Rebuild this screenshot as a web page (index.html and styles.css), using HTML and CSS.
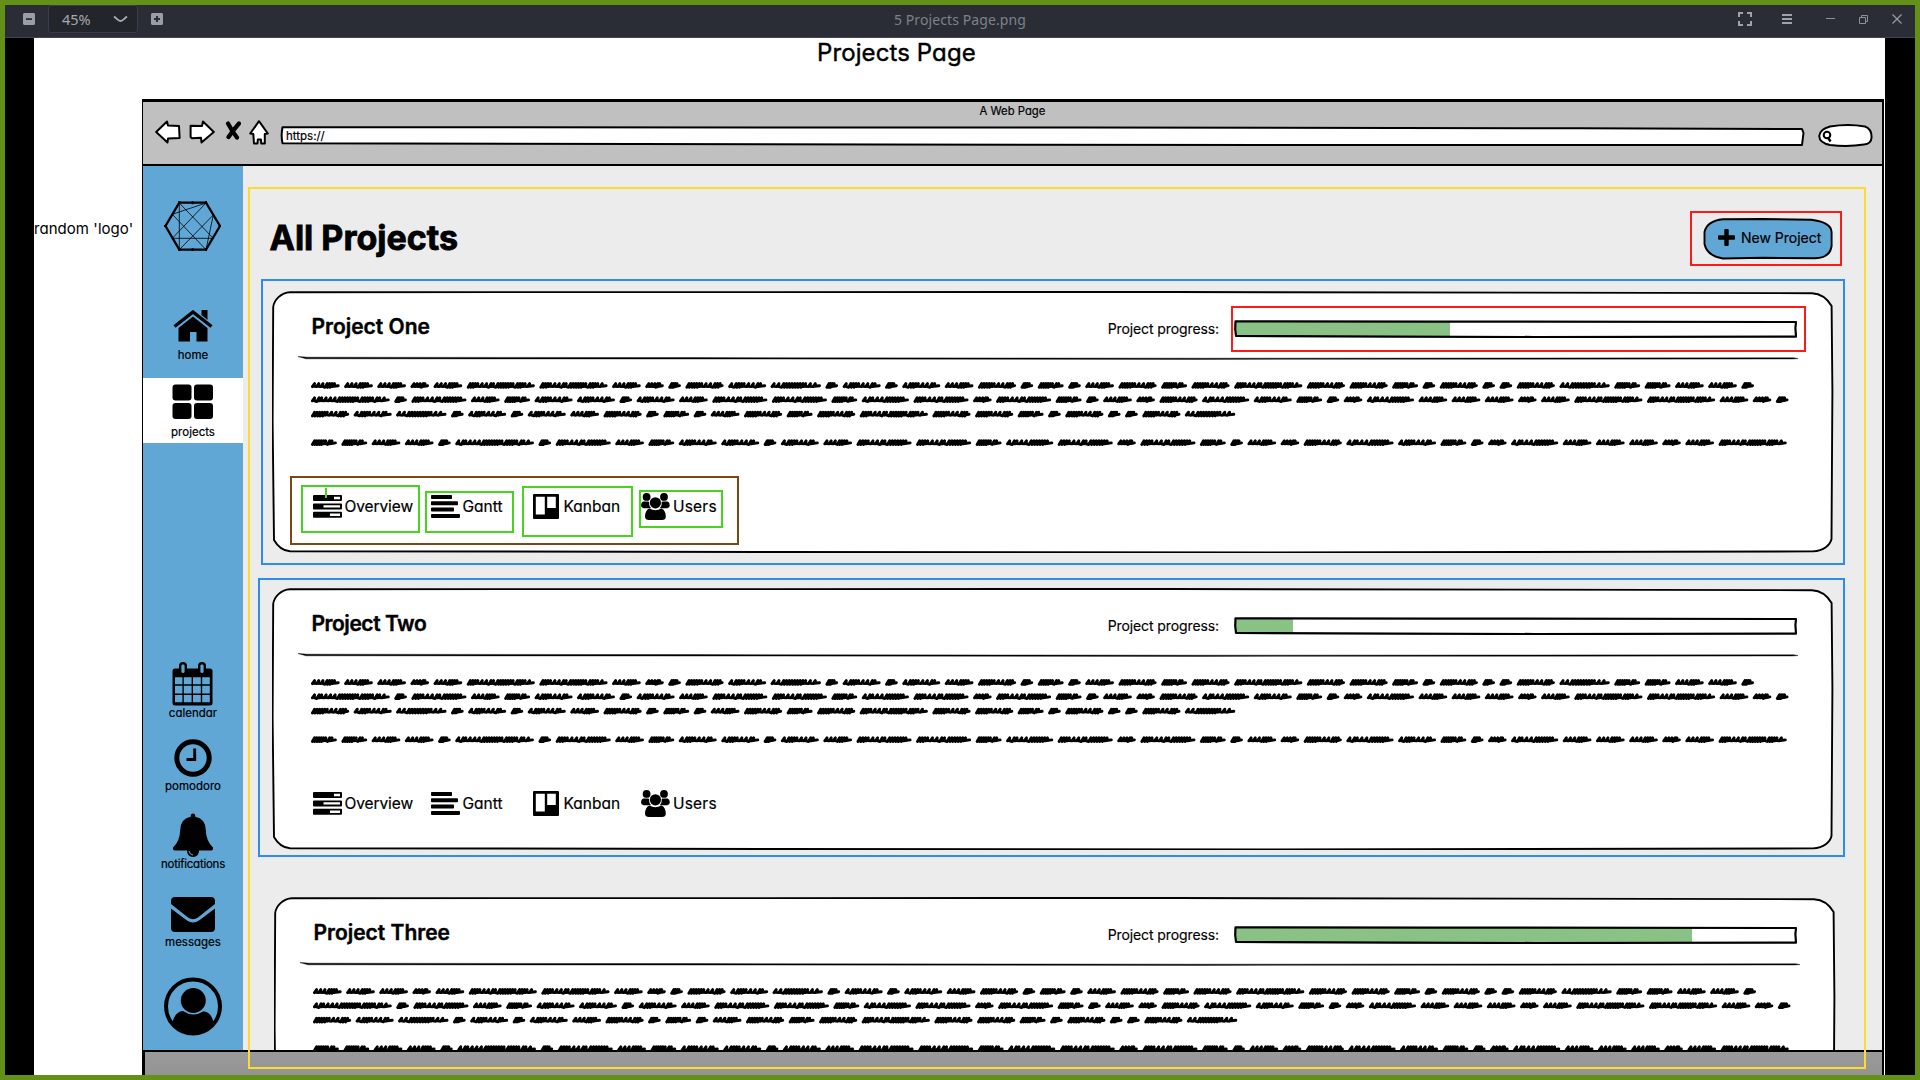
FILE: index.html
```html
<!DOCTYPE html>
<html lang="en">
<head>
<meta charset="utf-8">
<title>5 Projects Page.png</title>
<link rel="stylesheet" href="styles.css">
</head>
<body>
<svg class="defs" width="0" height="0">
  <defs>
    <symbol id="card-outline" viewBox="0 0 1562 262">
      <path d="M18 1.2C9 1.5 2 9 1.2 16L.6 130 2 249C6 256 12 260 18 260.2L500 261 1000 261.4 1541 260.4C1552 260 1558 254 1559.5 248L1560.4 100 1559.6 15C1555 7 1548 2.6 1540 2.2L900 1Z" fill="#fff" stroke="#000" stroke-width="1.9"/>
    </symbol>
    <symbol id="divider" viewBox="0 0 1500 4">
      <path d="M0 .6Q5 .9 9 1.2L400 1.6 900 2.2 1496 1.8 1500 2.6 1494 3 900 3.4 8 2.8Z" stroke="#000" stroke-width=".4"/>
    </symbol>
    <symbol id="bar-outline" viewBox="0 0 563 18">
      <path d="M1.5 1.4 200 1.6 562 2 561.4 8 562 16.6 300 17 160 16.6 2 16 1.2 9Z" fill="none" stroke="#000" stroke-width="2.2" stroke-linejoin="round"/>
    </symbol>
    <symbol id="i-overview" viewBox="0 0 29 23">
      <path fill-rule="evenodd" d="M1 0h27q1 0 1 1v4q0 1-1 1H1Q0 6 0 5V1Q0 0 1 0ZM21 1.8v2.4h6V1.8ZM1 8.4h27q1 0 1 1v4q0 1-1 1H1q-1 0-1-1v-4q0-1 1-1ZM10.5 10.2v2.4H27v-2.4ZM1 16.8h27q1 0 1 1v4q0 1-1 1H1q-1 0-1-1v-4q0-1 1-1ZM17 18.6V21h10v-2.4Z"/>
    </symbol>
    <symbol id="i-gantt" viewBox="0 0 29 23">
      <rect width="21" height="4" rx=".8"/><rect y="6.3" width="27" height="4" rx=".8"/><rect y="12.6" width="23" height="4" rx=".8"/><rect y="18.9" width="29" height="4" rx=".8"/>
    </symbol>
    <symbol id="i-kanban" viewBox="0 0 26 25">
      <path fill-rule="evenodd" d="M1 0h24q1 0 1 1v23q0 1-1 1H1q-1 0-1-1V1Q0 0 1 0ZM2.8 2.8v17.6h9V2.8ZM14.2 2.8V14h8.6V2.8Z"/>
    </symbol>
    <symbol id="i-users" viewBox="0 0 29 27">
      <circle cx="5.6" cy="3.9" r="3.9"/><circle cx="23" cy="3.9" r="3.9"/>
      <path d="M2 8.4h5.2q1 .2 1 1.4-.4 3.6 2.2 5.4H2.6Q0 14.600 0 12.600 0 9.500 2 8.400ZM26.800 8.400h-5.200q-1 .2-1 1.400.4 3.600-2.200 5.400h7.800q2.600-.6 2.600-2.600 0-3.100-2-4.200Z"/>
      <circle cx="14.400" cy="9.800" r="5.600"/>
      <path d="M8.500 15.500Q14.400 19 20.300 15.500 24.800 17 24.800 24 24.600 27 21 27H8Q4.300 27 4 24 4 17 8.500 15.500Z"/>
    </symbol>
  </defs>
</svg>

<div class="window">
  <header class="titlebar">
    <div class="zoom-tools">
      <svg class="zoom-out" width="12" height="12"><path d="M1 0h10l1 1v10l-1 1H1l-1-1V1Z" fill="#9a9ca6"/><path d="M3 5.200h6v1.800H3Z" fill="#2b2d36"/></svg>
      <div class="zoom-select"><span>45%</span><svg width="15" height="8"><path d="M1 1.500C4 3.500 5 6 7.500 6S11 3.500 14 1.500" fill="none" stroke="#a9abb3" stroke-width="1.900"/></svg></div>
      <svg class="zoom-in" width="12" height="12"><path d="M1 0h10l1 1v10l-1 1H1l-1-1V1Z" fill="#9a9ca6"/><path d="M3 5h2V3h2v2h2v2H7v2H5V7H3Z" fill="#2b2d36"/></svg>
    </div>
    <div class="file-name">5 Projects Page.png</div>
    <div class="window-buttons">
      <svg width="14" height="14"><path d="M5 1H1v4M9 1h4v4M1 9v4h4M13 9v4H9" fill="none" stroke="#a0a2a9" stroke-width="2"/></svg>
      <svg width="10" height="10"><path d="M0 1h10M0 5h10M0 9h10" stroke="#a0a2a9" stroke-width="2"/></svg>
      <svg width="9" height="10"><path d="M0 4.500h9" stroke="#8f9199"/></svg>
      <svg width="9" height="9"><path d="M.5 2.500h6v6h-6ZM2.500 2V.5h6v6H7" fill="none" stroke="#8f9199"/></svg>
      <svg width="10" height="10"><path d="M.5.5l9 9M9.500.5l-9 9" stroke="#9a9ca3" stroke-width="1.200"/></svg>
    </div>
  </header>

  <div class="viewer">
    <div class="canvas">
      <h1 class="canvas-title">Projects Page</h1>
      <div class="mock">
        <p class="note">random 'logo'</p>
        <div class="browser">
          <div class="chrome">
            <div class="chrome-title">A Web Page</div>
            <div class="chrome-row">
              <svg width="26" height="24"><path d="M1.200 12 12 1.500 13 5.500 24 6 24.600 18 13 18.500 12.500 22.500Z" fill="#fff" stroke="#000" stroke-width="2" stroke-linejoin="round"/></svg>
              <svg width="26" height="24"><path d="M24.800 12 14 1.500 13 6 1.600 5.800 1.600 17 3 18.300 12 17.800 12.500 22.500Z" fill="#fff" stroke="#000" stroke-width="2" stroke-linejoin="round"/></svg>
              <svg class="stop" width="16" height="19"><path d="M3 2.500Q7 10 12 16.500M14 2.500Q9 8 3.500 16" fill="none" stroke="#000" stroke-width="4.200" stroke-linecap="round"/></svg>
              <svg class="go-home" width="20" height="25"><path d="M10 1.200 18.800 13.500 15.800 14 15.800 23.500 12.200 23.500 12 19.500 8.800 19.500 8.500 23.500 5 23.500 4.300 14 1.200 13.500Z" fill="#fff" stroke="#000" stroke-width="2" stroke-linejoin="round"/></svg>
              <div class="address">
                <svg viewBox="0 0 1525 20" width="1525" height="20"><path d="M2.500 1.200 800 1.600 1300 2.200 1522 3 1523.500 7 1522 19 1100 19 600 18.600 2.500 17.200Q.8 10 2.500 1.200Z" fill="#fff" stroke="#000" stroke-width="2" stroke-linejoin="round"/></svg>
                <span>https://</span>
              </div>
              <svg class="search" width="55" height="23"><path d="M12 2.500Q30-.5 47 2.500 54 5 53.500 14 53 20 46 20.500 30 23 12 21 1.500 19 1.200 12 2 5 12 2.500Z" fill="#fff" stroke="#000" stroke-width="2"/><circle cx="9" cy="11" r="3.300" fill="none" stroke="#000" stroke-width="2"/><path d="M10 13.500 12.500 17.500" stroke="#000" stroke-width="2.400"/></svg>
            </div>
          </div>

          <div class="app">
            <nav class="sidebar">
              <svg class="logo" width="57" height="50"><g transform="translate(-164 -201)" fill="none" stroke="#000"><path d="M179.300 202.700H206L220 226 206 249.700H179.300L165.500 226Z" stroke-width="2.300"/><path d="M179.300 203V249M179.300 203 213.300 238.300M206 203 172.300 238.300M206 203 172.300 214.300M172.300 214.300 206 249.700M213.300 215 179.300 249.700M213.300 215 206 249.700M172.300 238.300H213.300" stroke-width=".8"/><path d="M163.800 226h3M218.600 226h3M179.300 201v3M206 201v3M192.600 201.200v3M192.600 248.200v3M179.300 248v3M206 248v3" stroke-width="2"/></g></svg>
              <a class="item home">
                <svg width="40" height="32"><path d="M5.500 18 20 6.500 34.500 18V31.500H23.500V22H17V31.500H5.500Z"/><path d="M1.500 16.500 20 2 38.500 16.500" fill="none" stroke="#61a7d6" stroke-width="6"/><path d="M1.500 16.500 20 2 38.500 16.500" fill="none" stroke="#000" stroke-width="3.400"/><path d="M28.500 0h6v10l-6-5Z"/></svg>
                <span>home</span>
              </a>
              <a class="item projects">
                <svg width="42" height="36"><rect x=".5" y=".5" width="19" height="16" rx="3"/><rect x="22" y=".5" width="19" height="16" rx="3"/><rect x=".5" y="19" width="19" height="16" rx="3"/><rect x="22" y="19" width="19" height="16" rx="3"/></svg>
                <span>projects</span>
              </a>
              <a class="item calendar">
                <svg width="41" height="44"><rect x=".5" y="6.500" width="40" height="37" rx="2.500"/><g fill="#61a7d6"><path d="M3 15.300h7.400v7H3ZM11.800 15.300h7.800v7h-7.800ZM21 15.300h7.800v7H21ZM30.200 15.300h7.600v7h-7.600ZM3 23.800h7.400v7.700H3ZM11.800 23.800h7.800v7.700h-7.800ZM21 23.800h7.800v7.700H21ZM30.200 23.800h7.600v7.700h-7.600ZM3 33h7.400v7.300H3ZM11.800 33h7.800v7.300h-7.800ZM21 33h7.800v7.300H21ZM30.200 33h7.600v7.300h-7.600Z"/></g><path d="M7 12V4Q7 0 11 0t4 4v8ZM26 12V4Q26 0 30 0t4 4v8Z"/><rect x="9.400" y="2.400" width="3.200" height="8.600" rx="1.400" fill="#61a7d6"/><rect x="28.400" y="2.400" width="3.200" height="8.600" rx="1.400" fill="#61a7d6"/></svg>
                <span>calendar</span>
              </a>
              <a class="item pomodoro">
                <svg width="38" height="38"><circle cx="19" cy="19" r="16.200" fill="none" stroke="#000" stroke-width="5"/><path d="M20.700 9.500V20.500H12.500" fill="none" stroke="#000" stroke-width="2.900"/></svg>
                <span>pomodoro</span>
              </a>
              <a class="item notifications">
                <svg width="42" height="45"><path d="M21 .5q2.500 0 2.300 3.200Q33.500 5.500 33.800 17 34 28 41 34.500q.5 3-2 3H3q-2.500 0-2-3Q8 28 8.200 17 8.500 5.500 18.700 3.700 18.500.5 21 .5ZM15 37.500H27Q27 44 21 44T15 37.500Z"/><path d="M17 38Q17.500 41.500 21 42" fill="none" stroke="#61a7d6"/></svg>
                <span>notifications</span>
              </a>
              <a class="item messages">
                <svg width="44" height="35"><path d="M4 0H40Q44 0 44 4V7Q35 14 27 20.500 22 24 17 20.500L0 7V4Q0 0 4 0ZM0 11.500 16 23.500Q22 27.500 28 23.500L44 11.500V31Q44 35 40 35H4Q0 35 0 31Z"/></svg>
                <span>messages</span>
              </a>
              <svg class="avatar" width="58" height="59"><circle cx="29" cy="29.500" r="27" fill="none" stroke="#000" stroke-width="4"/><circle cx="29.300" cy="23.500" r="12.500"/><path d="M19 34Q29.300 41 39.500 34.200 47.500 35 49.500 45.500L43 53Q29 60 15 53L8.500 45.500Q11 34.500 19 34Z"/></svg>
            </nav>

            <main class="main">
              <div class="page-head">
                <h2>All Projects</h2>
                <button class="new-project">
                  <svg class="pill" viewBox="0 0 130 42" width="130" height="42"><path d="M20 1.300 60 1 108 1.800Q128 4 128.600 14V28Q127 40 112 40.300L60 39.800 20 40.500Q4 38 1.500 26V14Q4 3 20 1.300Z" fill="#61a7d6" stroke="#000" stroke-width="1.900"/></svg>
                  <svg class="plus" width="17" height="17"><path d="M6.300 1q0-1 1-1h2.400q1 0 1 1v5.300H16q1 0 1 1v2.400q0 1-1 1h-5.300V16q0 1-1 1H7.300q-1 0-1-1v-5.300H1q-1 0-1-1V7.300q0-1 1-1h5.300Z"/></svg>
                  <span>New Project</span>
                </button>
              </div>

              <section class="card">
                <svg class="outline"><use href="#card-outline"/></svg>
                <div class="card-head"><h3>Project One</h3><span class="progress-label">Project progress:</span><div class="progress"><div class="fill" style="width:214px"></div><svg><use href="#bar-outline"/></svg></div></div>
                <svg class="divider"><use href="#divider"/></svg>
                <svg class="scribble"></svg>
                <div class="tabs">
                  <a><svg width="29" height="23"><use href="#i-overview"/></svg><span class="t-overview">Overview</span></a>
                  <a><svg width="29" height="23"><use href="#i-gantt"/></svg><span class="t-gantt">Gantt</span></a>
                  <a><svg width="26" height="25"><use href="#i-kanban"/></svg><span class="t-kanban">Kanban</span></a>
                  <a><svg width="29" height="27"><use href="#i-users"/></svg><span class="t-users">Users</span></a>
                </div>
              </section>

              <section class="card">
                <svg class="outline"><use href="#card-outline"/></svg>
                <div class="card-head"><h3 class="narrow">Project Two</h3><span class="progress-label">Project progress:</span><div class="progress"><div class="fill" style="width:57px"></div><svg><use href="#bar-outline"/></svg></div></div>
                <svg class="divider"><use href="#divider"/></svg>
                <svg class="scribble"></svg>
                <div class="tabs">
                  <a><svg width="29" height="23"><use href="#i-overview"/></svg><span class="t-overview">Overview</span></a>
                  <a><svg width="29" height="23"><use href="#i-gantt"/></svg><span class="t-gantt">Gantt</span></a>
                  <a><svg width="26" height="25"><use href="#i-kanban"/></svg><span class="t-kanban">Kanban</span></a>
                  <a><svg width="29" height="27"><use href="#i-users"/></svg><span class="t-users">Users</span></a>
                </div>
              </section>

              <section class="card last">
                <svg class="outline"><use href="#card-outline"/></svg>
                <div class="card-head"><h3>Project Three</h3><span class="progress-label">Project progress:</span><div class="progress"><div class="fill" style="width:456px"></div><svg><use href="#bar-outline"/></svg></div></div>
                <svg class="divider"><use href="#divider"/></svg>
                <svg class="scribble"></svg>
              </section>
            </main>
          </div>
          <div class="status"></div>
        </div>
      </div>
    </div>
  </div>

  <div class="mark page-mark"></div>
  <div class="mark button-mark"></div>
  <div class="mark card-one-mark"></div>
  <div class="mark card-two-mark"></div>
  <div class="mark progress-mark"></div>
  <div class="mark tabs-mark"></div>
  <div class="mark overview-mark"></div>
  <div class="mark gantt-mark"></div>
  <div class="mark kanban-mark"></div>
  <div class="mark users-mark"></div>
  <div class="tick"></div>
</div>
<script src="scribble.js"></script>
</body>
</html>
```
FILE: scribble.js
```js
// Placeholder copy: each letter is one word. s = loose stroke, d = dense stroke.
const WORDS = {
  A: { w: 28.6, p: 'sssddds' },
  B: { w: 18.5, p: 'sssds' },
  C: { w: 68.1, p: 'dddsssdsddddddsdddss' },
  D: { w: 12.6, p: 'ddds' },
  E: { w: 38.1, p: 'dddddsssddd' },
  F: { w: 37.9, p: 'sdddsssds' },
  G: { w: 78.7, p: 'sdssssdddddddsddddsdss' },
  M: { w: 47.1, p: 'sdsssdddddds' },
  N: { w: 50.3, p: 'ssddddddddsss' },
  O: { w: 55.0, p: 'dddsssdsdddddds' },
  P: { w: 25.8, p: 'dddddsds' }
};
const GAP = 4.57;
const LINES = [
  { y: 9.3, t: 'AAABACCABDEFNDFDFAEDPDAEPECEEPDEDDENPPAAD' },
  { y: 23.5, t: 'GDOAPFFDFAOOPMOBOPDABEMFPDBMAAABACCABD' },
  { y: 37.9, t: 'EFNDFDFAEDPDAEPECEEPDEDDEN' },
  { y: 66.5, t: 'PPAADGDOAPFFDFAOOPMOBOPDABEMFPDBMAAABAC' }
];

function word(x, y, { w, p }) {
  const total = [...p].reduce((n, c) => n + (c === 's' ? 2 : 1.15), 0);
  const unit = (w - 4.5) / total;
  let d = '';
  let cx = x + 1.4;
  for (const c of p) {
    const step = unit * (c === 's' ? 2 : 1.15);
    const low = y + (c === 's' ? 1.3 : 2);
    d += (d ? 'L' : 'M') + cx.toFixed(1) + ' ' + low + 'L' + (cx + 2.2).toFixed(1) + ' ' + (y - 1.7);
    d += 'L' + (cx + 1.5).toFixed(1) + ' ' + (y + 1);
    cx += step;
  }
  return d + 'L' + (x + w - 1.4).toFixed(1) + ' ' + (y + 0.4);
}

let path = '';
for (const line of LINES) {
  let x = 0;
  for (const key of line.t) {
    path += word(x, line.y, WORDS[key]);
    x += (WORDS[key].w + GAP);
  }
}
document.querySelectorAll('.scribble').forEach(svg => {
  svg.innerHTML = '<path d="' + path + '"/>';
});
```
FILE: styles.css
```css
* { box-sizing: border-box; }
body {
  margin: 0;
  background: #639118;
  font-family: Inter, "Open Sans", sans-serif;
  font-feature-settings: "cv11";
  color: #000;
}
h1, h2, h3, p { margin: 0; }
svg { display: block; flex: none; }
.defs { position: absolute; }

.window {
  position: relative;
  display: flex;
  flex-direction: column;
  width: 1920px;
  height: 1080px;
  border: 5px solid #639118;
  overflow: hidden;
}

/* Viewer title bar */
.titlebar {
  display: grid;
  grid-template-columns: 1fr auto 1fr;
  align-items: center;
  height: 33px;
  padding-bottom: 4px;
  background: #2b2d36;
  border-bottom: 1px solid #41434e;
  font-family: "Noto Sans", sans-serif;
}
.zoom-tools { display: flex; align-items: center; padding-left: 18px; }
.zoom-select {
  display: flex;
  align-items: center;
  justify-content: space-between;
  width: 90px;
  height: 28px;
  margin: 0 13px;
  padding: 0 9px 0 13px;
  border: 1px solid #3a3c47;
  border-radius: 3px;
  background: #23252c;
  color: #a6a8ad;
  font-size: 14.5px;
}
.zoom-select span { letter-spacing: -.1px; }
.file-name { color: #7d8188; font-size: 14px; letter-spacing: .1px; }
.window-buttons {
  display: flex;
  align-items: center;
  justify-content: flex-end;
  padding-right: 13px;
}
.window-buttons svg:nth-child(1) { margin-right: 30px; }
.window-buttons svg:nth-child(2) { margin-right: 34px; }
.window-buttons svg:nth-child(3) { margin-right: 24px; }
.window-buttons svg:nth-child(4) { margin-right: 24px; }

.viewer { flex: 1; min-height: 0; padding: 0 30px 0 29px; background: #000; }
.canvas { height: 100%; background: #fff; overflow: hidden; }
.canvas-title {
  height: 61px;
  padding: 0 0 0 783px;
  font-size: 24px;
  line-height: 29px;
  font-weight: 400;
  letter-spacing: .1px;
  -webkit-text-stroke: .4px #000;
}
.mock { display: grid; grid-template-columns: 108px 1743px; }
.note { padding-top: 120px; font-size: 15px; line-height: 20px; letter-spacing: .05px; white-space: nowrap; }

/* Sketched browser */
.browser {
  height: 976px;
  width: 1742px;
  border: 2px solid #000;
  border-top-width: 3px;
  border-bottom: 0;
  border-left-width: 1px;
}
.chrome { height: 64px; background: #c0c0c0; border-bottom: 2px solid #000; }
.chrome-title { font-size: 11.300px; line-height: 14px; padding-top: 2px; height: 16px; text-align: center; -webkit-text-stroke: .2px #000; }
.chrome-row { display: flex; align-items: center; padding-left: 12px; height: 28px; }
.chrome-row svg:nth-child(2) { margin-left: 8px; }
.chrome-row .stop { margin: -3px 0 0 10px; }
.chrome-row .go-home { margin-left: 8px; }
.address { display: grid; align-items: center; margin: 8px 0 0 11px; width: 1525px; }
.address > * { grid-area: 1 / 1; }
.address span { margin-top: -1px; padding-left: 6px; font-size: 11.500px; line-height: 14px; -webkit-text-stroke: .2px #000; }
.search { margin: 6px 0 0 13px; }

.app { display: flex; height: 884px; overflow: hidden; background: #ececec; }
.sidebar {
  display: flex;
  flex-direction: column;
  align-items: center;
  width: 100px;
  padding-top: 35px;
  background: #61a7d6;
}
.sidebar svg { margin-left: -1px; }
.item {
  display: flex;
  flex-direction: column;
  align-items: center;
  width: 100%;
  font-size: 11.500px;
  line-height: 14px;
  -webkit-text-stroke: .2px #000;
}
.item svg { margin-bottom: 6px; -webkit-text-stroke: 0; }
.home { margin-top: 59px; }
.projects { height: 65px; margin-top: 16px; padding-top: 6px; background: #fff; }
.projects svg { margin-bottom: 5px; }
.calendar { margin-top: 219px; }
.calendar svg { margin-bottom: 0; }
.notifications svg { margin-bottom: -1px; }
.notifications span { letter-spacing: -.25px; }
.pomodoro { margin-top: 19px; }
.pomodoro svg { margin-bottom: 2px; }
.notifications { margin-top: 20px; }
.messages { margin-top: 26px; }
.messages svg { margin-bottom: 3px; }
.avatar { margin-top: 28px; }

.main { flex: 1; padding-left: 28.500px; }
.page-head {
  display: flex;
  justify-content: space-between;
  align-items: center;
  height: 125px;
  padding: 20px 49px 0 0;
}
.page-head h2 { font-size: 34px; line-height: 40px; font-weight: 700; margin: -2px 0 0 -2px; -webkit-text-stroke: .8px #000; }
.new-project {
  display: grid;
  grid-template-columns: 40px 1fr;
  align-items: center;
  width: 130px;
  height: 42px;
  padding: 0;
  border: 0;
  background: none;
  font: inherit;
  font-size: 14px;
  text-align: left;
}
.new-project > * { grid-row: 1; }
.new-project .pill { grid-column: 1 / 3; }
.new-project .plus { grid-column: 1; margin: -2px 0 0 15px; }
.new-project span { grid-column: 2; margin: -2px 0 0 -2px; white-space: nowrap; -webkit-text-stroke: .2px #000; }

.card { position: relative; width: 1562px; height: 262px; margin-bottom: 35px; }
.card.last { margin: 47px 0 0 2px; }
.outline { position: absolute; inset: 0; width: 1562px; height: 262px; z-index: 0; }
.card > :not(.outline) { position: relative; }
.card-head { display: flex; align-items: center; height: 65px; padding: 11px 36.500px 0 40px; }
.card.last .card-head { padding-right: 38.500px; }
.card-head h3 { flex: 1; margin-top: -5px; font-size: 21px; line-height: 26px; font-weight: 600; -webkit-text-stroke: .4px #000; }
.card-head h3.narrow { letter-spacing: -.450px; }
.progress-label { font-size: 14px; letter-spacing: -.1px; margin: -1px 15px 0 0; -webkit-text-stroke: .15px #000; }
.progress { display: grid; width: 563px; height: 18px; background: #fff; }
.progress > * { grid-area: 1 / 1; }
.progress svg { width: 563px; height: 18px; z-index: 1; }
.fill { height: 14px; margin: 2px 0 0 2px; background: #8ac184; }
.divider { width: 1500px; height: 4px; margin-left: 26px; }
.scribble {
  width: 1490px;
  height: 76px;
  margin: 16px 0 0 39.500px;
  fill: none;
  stroke: #000;
  stroke-width: 2.900;
  stroke-linecap: round;
  stroke-linejoin: round;
}
.tabs {
  display: grid;
  grid-template-columns: 118px 102px 108.500px auto;
  height: 27px;
  margin: 41px 0 0 41px;
  font-size: 15.500px;
}
.tabs a { display: flex; align-items: center; gap: 3px; -webkit-text-stroke: .2px #000; }
.tabs a:nth-child(3) { gap: 5px; }
.t-overview { letter-spacing: -.1px; }
.t-users { letter-spacing: .2px; }
.status { height: 26px; background: linear-gradient(#9a9a9a, #939393); border-top: 2px solid #000; border-left: 2px solid #000; }

/* Review annotations drawn over the mockup; offsets are from inside the window border */
.mark { position: absolute; border: 2px solid; }
.page-mark { left: 243px; top: 182px; width: 1618px; height: 882px; color: #ffdb2f; }
.button-mark { left: 1685px; top: 206px; width: 152px; height: 55px; color: #ff1a1a; }
.card-one-mark { left: 256px; top: 274px; width: 1584px; height: 286px; color: #2d8bf2; }
.card-two-mark { left: 253px; top: 573px; width: 1587px; height: 279px; color: #2d8bf2; }
.progress-mark { left: 1226px; top: 301px; width: 575px; height: 46px; color: #ff1a1a; }
.tabs-mark { left: 285px; top: 471px; width: 449px; height: 69px; color: #7b4712; }
.overview-mark, .gantt-mark, .kanban-mark, .users-mark { color: #46d41f; }
.overview-mark { left: 296px; top: 480px; width: 119px; height: 48px; }
.gantt-mark { left: 420px; top: 486px; width: 89px; height: 42px; }
.kanban-mark { left: 517px; top: 481px; width: 111px; height: 51px; }
.users-mark { left: 634px; top: 485px; width: 84px; height: 38px; }
.tick { position: absolute; left: 320px; top: 483px; width: 2px; height: 10px; background: #46d41f; }
```
